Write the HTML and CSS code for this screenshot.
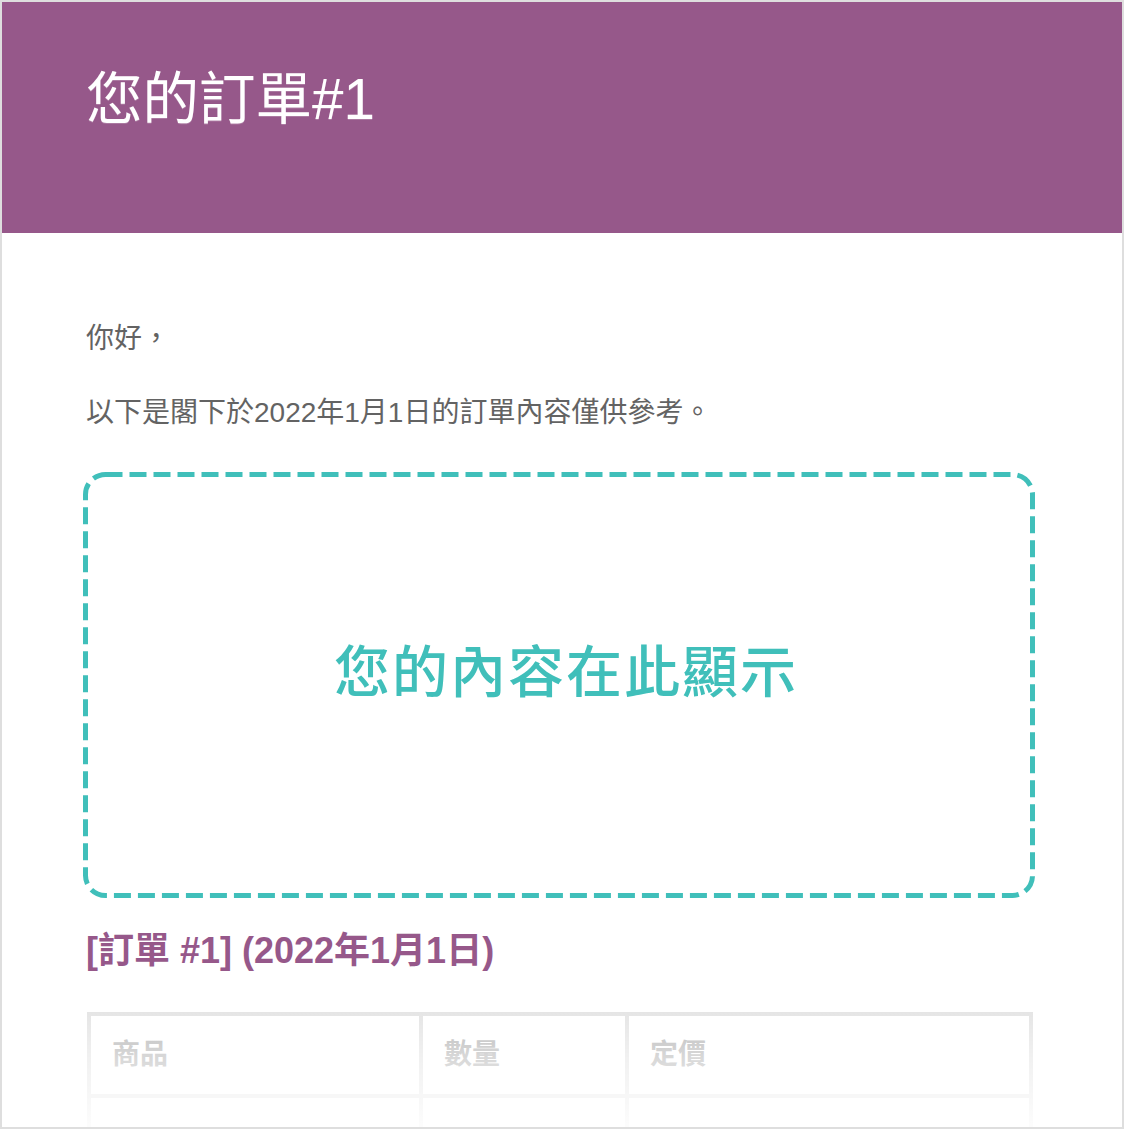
FILE: index.html
```html
<!DOCTYPE html>
<html lang="zh-Hant">
<head>
<meta charset="utf-8">
<title>您的訂單#1</title>
<link rel="stylesheet" href="styles.css">
</head>
<body>
<div class="card">
  <header class="mail-header">
    <h1 class="mail-title">您的訂單#1</h1>
  </header>
  <main class="mail-body">
    <p class="para">你好，</p>
    <p class="para para-second">以下是閣下於2022年1月1日的訂單內容僅供參考。</p>
    <div class="placeholder">
      <svg class="dash" width="952" height="426" viewBox="0 0 952 426" aria-hidden="true">
        <rect x="2.5" y="2.5" width="947" height="421" rx="20" ry="20" fill="none" stroke="#40bfba" stroke-width="5" stroke-dasharray="17 7"/>
      </svg>
      <span class="placeholder-text">您的內容在此顯示</span>
    </div>
    <h2 class="order-title">[訂單 #1] (2022年1月1日)</h2>
    <table class="order-table">
      <thead>
        <tr>
          <th class="c1">商品</th>
          <th class="c2">數量</th>
          <th class="c3">定價</th>
        </tr>
      </thead>
      <tbody>
        <tr>
          <td class="c1">&nbsp;</td>
          <td class="c2">&nbsp;</td>
          <td class="c3">&nbsp;</td>
        </tr>
      </tbody>
    </table>
  </main>
  <div class="fade"></div>
</div>
</body>
</html>
```
FILE: styles.css
```css
html, body {
  margin: 0;
  padding: 0;
  background: #ffffff;
}

.card {
  position: relative;
  width: 1124px;
  height: 1129px;
  box-sizing: border-box;
  border: 2px solid #dedede;
  overflow: hidden;
  background: #ffffff;
  font-family: "Liberation Sans", "Noto Sans CJK TC", sans-serif;
}

.mail-header {
  background: #96588a;
  height: 231px;
  box-sizing: border-box;
  padding: 64px 84px 0 84px;
}

.mail-title {
  margin: 0;
  color: #ffffff;
  font-size: 56.5px;
  line-height: 67px;
  font-weight: 400;
  text-shadow: 0 1px 0 #ab79a1;
}

.mail-body {
  padding: 87px 84px 0 84px;
}

.para {
  margin: 0;
  color: #636363;
  font-size: 28px;
  line-height: 38px;
}

.para-second {
  margin-top: 36px;
}

.placeholder {
  position: relative;
  margin: 40px 0 0 -3px;
  width: 952px;
  height: 426px;
  box-sizing: border-box;
  display: flex;
  align-items: center;
  justify-content: center;
  padding: 0 0 26px 14px;
}

.dash {
  position: absolute;
  left: 0;
  top: 0;
}

.placeholder-text {
  color: #40bfba;
  font-size: 56px;
  line-height: 67px;
  font-weight: 500;
  letter-spacing: 2px;
}

.order-title {
  margin: 29px 0 0 0;
  color: #96588a;
  font-size: 36px;
  line-height: 48px;
  font-weight: 700;
}

.order-table {
  margin: 37px 0 0 1px;
  width: 946px;
  table-layout: fixed;
  border-collapse: separate;
  border-spacing: 0;
  border-top: 4px solid #e5e5e5;
  border-left: 4px solid #e5e5e5;
  border-right: 4px solid #e5e5e5;
}

.order-table th,
.order-table td {
  box-sizing: border-box;
  height: 82px;
  padding: 0 0 0 21px;
  border-bottom: 4px solid #e5e5e5;
  border-right: 4px solid #e5e5e5;
  text-align: left;
  vertical-align: middle;
}

.order-table .c1 { width: 332px; }
.order-table .c2 { width: 206px; }
.order-table .c3 { width: 400px; border-right: 0; }

.order-table th {
  color: #b8b8b8;
  font-size: 28px;
  font-weight: 700;
  line-height: 40px;
}

.fade {
  position: absolute;
  left: 0;
  right: 0;
  bottom: 0;
  height: 116px;
  background: linear-gradient(to bottom, rgba(255,255,255,0) 0%, rgba(255,255,255,0.45) 40%, rgba(255,255,255,0.9) 100%);
  pointer-events: none;
}
```
